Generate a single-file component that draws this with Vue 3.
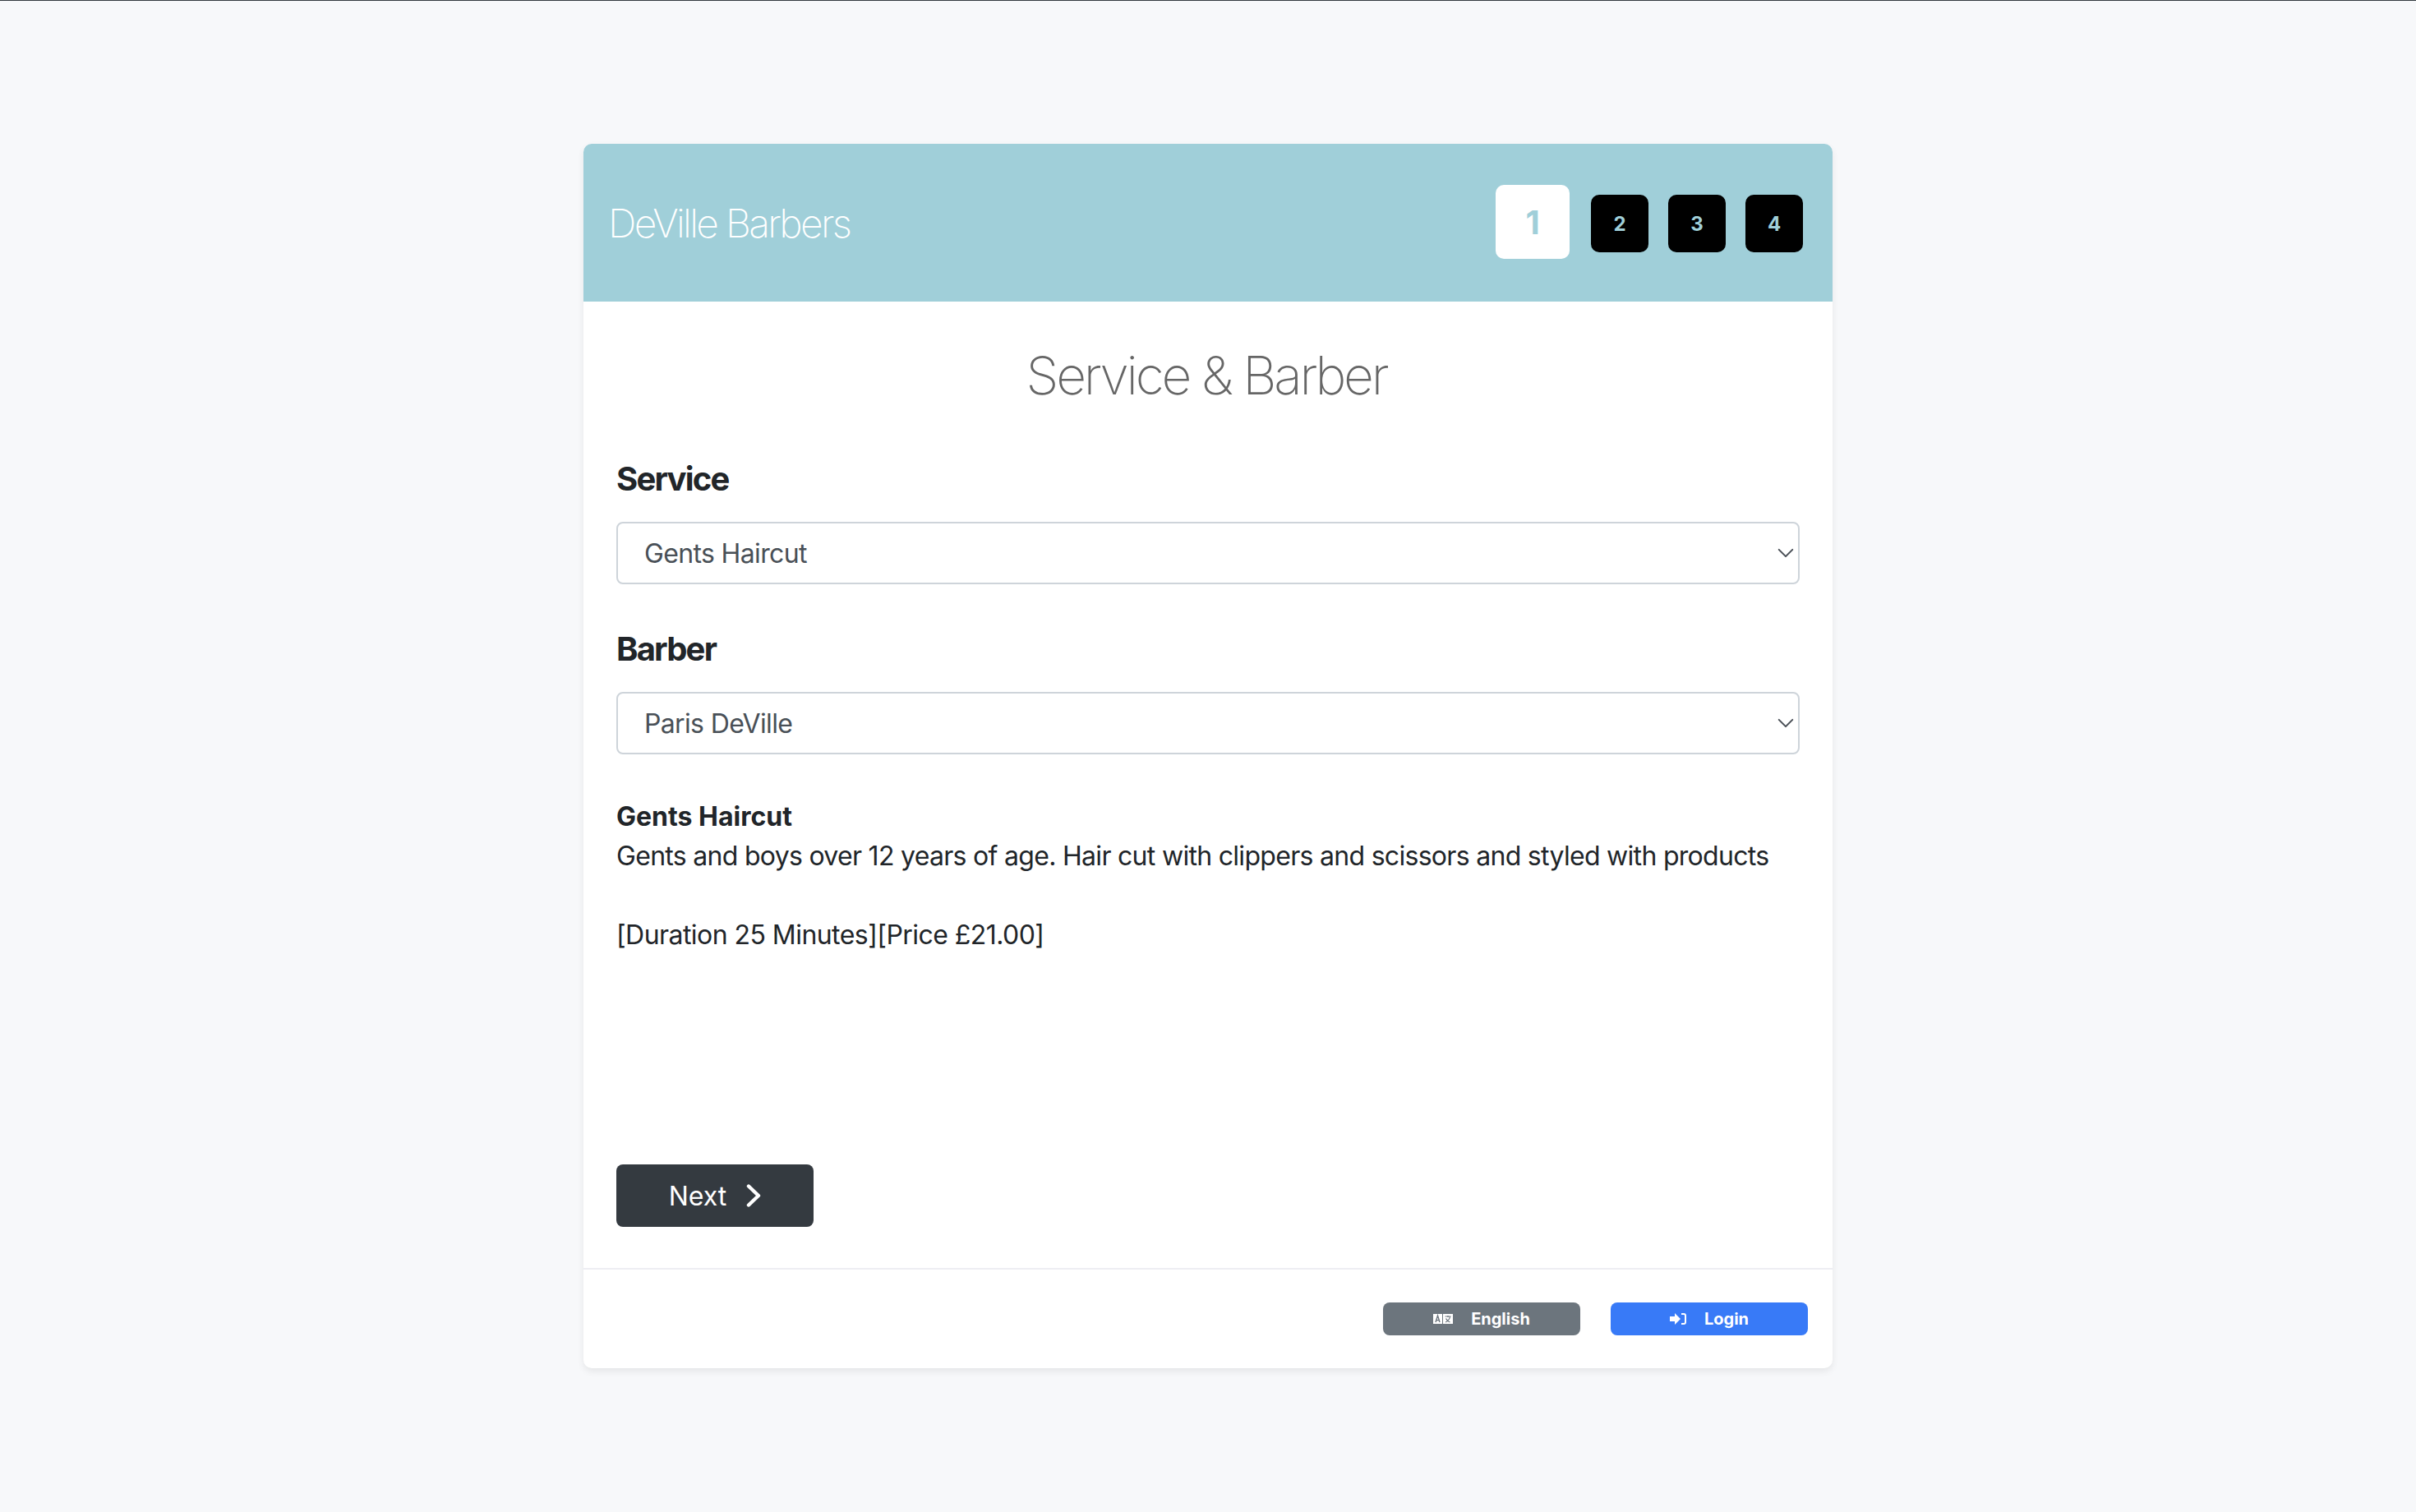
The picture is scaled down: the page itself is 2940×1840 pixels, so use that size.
<script setup>
import { ref } from "vue";

const steps = [1, 2, 3, 4];
const activeStep = ref(1);
const service = ref("Gents Haircut");
const barber = ref("Paris DeVille");
</script>

<template>
  <main class="page">
    <div class="card">
      <header class="card-header">
        <h1 class="brand">DeVille Barbers</h1>
        <div class="steps">
          <div v-for="step in steps" :key="step" class="step" :class="{ active: step === activeStep }">{{ step }}</div>
        </div>
      </header>

      <section class="card-body">
        <h2 class="title">Service &amp; Barber</h2>

        <label class="field-label">Service</label>
        <div class="select-wrap">
          <select v-model="service">
            <option>Gents Haircut</option>
          </select>
          <svg class="caret" viewBox="0 0 16 16"><path d="M2 5l6 6 6-6" fill="none" stroke="#4a5057" stroke-width="1.5" stroke-linecap="round" stroke-linejoin="round"/></svg>
        </div>

        <label class="field-label second">Barber</label>
        <div class="select-wrap">
          <select v-model="barber">
            <option>Paris DeVille</option>
          </select>
          <svg class="caret" viewBox="0 0 16 16"><path d="M2 5l6 6 6-6" fill="none" stroke="#4a5057" stroke-width="1.5" stroke-linecap="round" stroke-linejoin="round"/></svg>
        </div>

        <div class="description">
          <strong>Gents Haircut</strong>
          <p>Gents and boys over 12 years of age. Hair cut with clippers and scissors and styled with products</p>
          <p class="details">[Duration 25 Minutes][Price £21.00]</p>
        </div>

        <button class="btn-next">
          <span>Next</span>
          <svg class="chevron" viewBox="0 0 18 28"><path d="M3 2.500L15 14 3 25.500" fill="none" stroke="#fff" stroke-width="4.400" stroke-linecap="round" stroke-linejoin="round"/></svg>
        </button>
      </section>

      <footer class="card-footer">
        <button class="btn-small grey">
          <svg class="icon-lang" viewBox="0 0 24 12">
            <rect x="0" y="0" width="11" height="12" fill="#fff"/>
            <rect x="12" y="0" width="12" height="12" fill="#fff"/>
            <path d="M3 10l2.500-8 2.500 8M3.800 7.600h3.400" fill="none" stroke="#6c757d" stroke-width="1.400"/>
            <path d="M14.500 3h7M18 2v2M20.500 3.500c-.6 3-3 5.400-5.500 6.500M15.500 5.500c.8 2 2.500 3.500 5 4.500" fill="none" stroke="#6c757d" stroke-width="1.200"/>
          </svg>
          <span>English</span>
        </button>
        <button class="btn-small blue">
          <svg class="icon-login" viewBox="0 0 20 14">
            <path d="M0 4h6V0l7 7-7 7v-4H0z" fill="#fff"/>
            <path d="M14 1h3a2 2 0 0 1 2 2v8a2 2 0 0 1-2 2h-3" fill="none" stroke="#fff" stroke-width="2"/>
          </svg>
          <span>Login</span>
        </button>
      </footer>
    </div>
  </main>
</template>

<style scoped>
.page {
  min-height: 1840px;
  box-sizing: border-box;
  background: #f7f8fa;
  border-top: 1px solid #343a40;
  padding-top: 174px;
  font-family: Inter, "Liberation Sans", sans-serif;
  color: #212529;
}

.card {
  width: 1520px;
  margin: 0 auto;
  background: #fff;
  border-radius: 10px;
  box-shadow: 0 4px 8px rgba(0, 0, 0, 0.075);
  overflow: hidden;
}

.card-header {
  height: 192px;
  background: #a0cfd9;
  display: flex;
  align-items: center;
  justify-content: space-between;
  padding: 0 36px 0 30px;
}

.brand {
  margin: 0;
  color: #fff;
  font-size: 48px;
  font-weight: 200;
  letter-spacing: -2.700px;
}

.steps {
  display: flex;
  align-items: flex-start;
  gap: 24px;
  margin-bottom: 2px;
}

.step {
  width: 70px;
  height: 70px;
  margin-top: 12px;
  border-radius: 10px;
  background: #000;
  color: #a0cfd9;
  font-size: 24px;
  font-weight: 700;
  display: flex;
  align-items: center;
  justify-content: center;
}

.step.active {
  width: 90px;
  height: 90px;
  margin-top: 0;
  margin-right: 2px;
  background: #fff;
  font-size: 40px;
}

.card-body {
  padding: 51px 40px 50px;
}

.title {
  margin: 0 0 64px;
  padding-right: 4px;
  text-align: center;
  font-size: 64px;
  line-height: 77px;
  font-weight: 200;
  color: #666;
  letter-spacing: -3.200px;
}

.field-label {
  display: block;
  font-size: 40px;
  line-height: 48px;
  font-weight: 700;
  letter-spacing: -1.800px;
  margin-bottom: 28px;
}

.field-label.second {
  margin-top: 55px;
}

.select-wrap {
  position: relative;
}

select {
  display: block;
  width: 100%;
  height: 76px;
  box-sizing: border-box;
  appearance: none;
  background: #fff;
  border: 2px solid #ced4da;
  border-radius: 8px;
  padding: 0 60px 0 32px;
  font-family: inherit;
  font-size: 32px;
  color: #495057;
  letter-spacing: -0.650px;
}

.caret {
  position: absolute;
  right: 6px;
  top: 50%;
  width: 22px;
  height: 22px;
  margin-top: -11px;
  pointer-events: none;
}

.description {
  margin-top: 52px;
  font-size: 32px;
  line-height: 48px;
  letter-spacing: -0.700px;
}

.description strong {
  letter-spacing: 0;
}

.description p {
  margin: 0;
}

.description .details {
  margin-top: 48px;
  letter-spacing: -0.550px;
}

.btn-next {
  display: flex;
  align-items: center;
  justify-content: center;
  gap: 24px;
  width: 240px;
  height: 76px;
  margin-top: 255px;
  background: #343a40;
  border: none;
  border-radius: 8px;
  color: #fff;
  font-family: inherit;
  font-size: 32px;
}

.chevron {
  width: 18px;
  height: 28px;
}

.card-footer {
  display: flex;
  justify-content: flex-end;
  gap: 37px;
  padding: 40px 30px;
  border-top: 2px solid #eeeef3;
}

.btn-small {
  display: flex;
  align-items: center;
  justify-content: center;
  gap: 22px;
  width: 240px;
  height: 40px;
  border: none;
  border-radius: 8px;
  color: #fff;
  font-family: inherit;
  font-size: 20px;
  font-weight: 700;
}

.grey {
  background: #6c757d;
}

.blue {
  background: #387af7;
}

.icon-lang {
  width: 24px;
  height: 12px;
}

.icon-login {
  width: 20px;
  height: 14px;
}
</style>

<style>
body {
  background: #f7f8fa;
}
</style>
